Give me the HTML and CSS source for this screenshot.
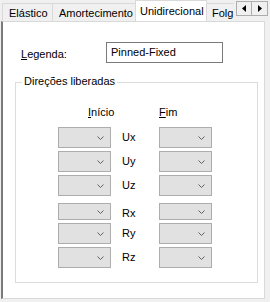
FILE: index.html
```html
<!DOCTYPE html>
<html>
<head>
<meta charset="utf-8">
<link rel="stylesheet" href="styles.css">
</head>
<body>
<div class="tabstrip">
  <div class="tabs">
    <div class="tab t1">Elástico</div>
    <div class="tab t2">Amortecimento</div>
    <div class="tab sel">Unidirecional</div>
    <div class="tab t4">Folg</div>
  </div>
  <div class="scroll">
    <div class="sbtn"><svg width="4" height="7" viewBox="0 0 4 7"><path d="M4 0 L0 3.5 L4 7 Z" fill="#000"/></svg></div>
    <div class="sbtn"><svg width="4" height="7" viewBox="0 0 4 7"><path d="M0 0 L4 3.5 L0 7 Z" fill="#000"/></svg></div>
  </div>
</div>
<div class="panel">
  <div class="row-legend">
    <span class="lbl"><u>L</u>egenda:</span>
    <div class="input">Pinned-Fixed</div>
  </div>
  <div class="group">
    <span class="gtitle">Direções liberadas</span>
    <div class="grid">
      <div class="hdr h1"><u>I</u>nício</div><div></div><div class="hdr h2"><u>F</u>im</div>

      <div class="combo"><svg width="7" height="4" viewBox="0 0 7 4"><path d="M0.5 0.5 L3.5 3.5 L6.5 0.5" fill="none" stroke="#606060" stroke-width="1"/></svg></div>
      <div class="dir">Ux</div>
      <div class="combo"><svg width="7" height="4" viewBox="0 0 7 4"><path d="M0.5 0.5 L3.5 3.5 L6.5 0.5" fill="none" stroke="#606060" stroke-width="1"/></svg></div>

      <div class="combo"><svg width="7" height="4" viewBox="0 0 7 4"><path d="M0.5 0.5 L3.5 3.5 L6.5 0.5" fill="none" stroke="#606060" stroke-width="1"/></svg></div>
      <div class="dir">Uy</div>
      <div class="combo"><svg width="7" height="4" viewBox="0 0 7 4"><path d="M0.5 0.5 L3.5 3.5 L6.5 0.5" fill="none" stroke="#606060" stroke-width="1"/></svg></div>

      <div class="combo"><svg width="7" height="4" viewBox="0 0 7 4"><path d="M0.5 0.5 L3.5 3.5 L6.5 0.5" fill="none" stroke="#606060" stroke-width="1"/></svg></div>
      <div class="dir">Uz</div>
      <div class="combo"><svg width="7" height="4" viewBox="0 0 7 4"><path d="M0.5 0.5 L3.5 3.5 L6.5 0.5" fill="none" stroke="#606060" stroke-width="1"/></svg></div>

      <div class="combo sp"><svg width="7" height="4" viewBox="0 0 7 4"><path d="M0.5 0.5 L3.5 3.5 L6.5 0.5" fill="none" stroke="#606060" stroke-width="1"/></svg></div>
      <div class="dir sp">Rx</div>
      <div class="combo sp"><svg width="7" height="4" viewBox="0 0 7 4"><path d="M0.5 0.5 L3.5 3.5 L6.5 0.5" fill="none" stroke="#606060" stroke-width="1"/></svg></div>

      <div class="combo"><svg width="7" height="4" viewBox="0 0 7 4"><path d="M0.5 0.5 L3.5 3.5 L6.5 0.5" fill="none" stroke="#606060" stroke-width="1"/></svg></div>
      <div class="dir">Ry</div>
      <div class="combo"><svg width="7" height="4" viewBox="0 0 7 4"><path d="M0.5 0.5 L3.5 3.5 L6.5 0.5" fill="none" stroke="#606060" stroke-width="1"/></svg></div>

      <div class="combo"><svg width="7" height="4" viewBox="0 0 7 4"><path d="M0.5 0.5 L3.5 3.5 L6.5 0.5" fill="none" stroke="#606060" stroke-width="1"/></svg></div>
      <div class="dir">Rz</div>
      <div class="combo"><svg width="7" height="4" viewBox="0 0 7 4"><path d="M0.5 0.5 L3.5 3.5 L6.5 0.5" fill="none" stroke="#606060" stroke-width="1"/></svg></div>
    </div>
  </div>
</div>
</body>
</html>
```
FILE: styles.css
```css
html, body {
  margin: 0;
  padding: 0;
  background: #f0f0f0;
  font-family: "Liberation Sans", Arial, sans-serif;
  font-size: 11px;
  color: #000;
  width: 270px;
  height: 302px;
  overflow: hidden;
}
.tabstrip {
  display: flex;
  height: 21px;
  position: relative;
  z-index: 2;
}
.tabs {
  display: flex;
  width: 236px;
  overflow: hidden;
  padding-left: 2px;
  box-sizing: border-box;
  align-items: flex-end;
}
.tab {
  flex: none;
  box-sizing: border-box;
  height: 18px;
  margin-top: 3px;
  border: 1px solid #d9d9d9;
  border-bottom: none;
  border-right: none;
  background: #f0f0f0;
  padding: 3px 0 0 6px;
  white-space: nowrap;
}
.t1 { width: 50px; }
.t2 { width: 83px; }
.t4 { width: 27px; padding-left: 5px; }
.sel {
  width: 72px;
  height: 22px;
  margin-top: 0;
  margin-bottom: -1px;
  background: #fff;
  padding: 4px 0 0 4px;
  border-right: 1px solid #d9d9d9;
}
.sel + .tab { border-left: none; }
.scroll {
  display: flex;
  padding-top: 1px;
}
.sbtn {
  width: 16px;
  height: 15px;
  box-sizing: border-box;
  border: 1px solid #adadad;
  background: #f0f0f0;
  display: flex;
  align-items: center;
  justify-content: center;
}
.sbtn + .sbtn { border-left: none; width: 16px; }
.panel {
  box-sizing: border-box;
  margin-left: 1px;
  width: 264px;
  height: 278px;
  background: #fff;
  border: 1px solid #d9d9d9;
  border-left: 2px solid #7a7a7a;
  padding: 20px 0 0 18px;
}
.row-legend {
  display: flex;
  align-items: center;
  height: 21px;
}
.lbl {
  width: 85px;
  padding-top: 3px;
}
.input {
  box-sizing: border-box;
  width: 117px;
  height: 21px;
  border: 1px solid #7a7a7a;
  padding: 3px 0 0 4px;
}
.group {
  position: relative;
  box-sizing: border-box;
  margin: 19px 0 0 -6px;
  width: 243px;
  height: 201px;
  border: 1px solid #dcdcdc;
}
.gtitle {
  position: absolute;
  top: -8px;
  left: 6px;
  background: #fff;
  padding: 0 2px;
  line-height: 13px;
}
.grid {
  display: grid;
  grid-template-columns: 53px 48px 53px;
  grid-auto-rows: 21px;
  row-gap: 3px;
  padding: 20px 0 0 42px;
}
.hdr {
  line-height: 13px;
  padding-top: 3px;
}
.h1 { padding-left: 30px; }
.h2 { padding-left: 0; }
.combo {
  box-sizing: border-box;
  background: #e1e1e1;
  border: 1px solid #adadad;
  display: flex;
  align-items: center;
  justify-content: flex-end;
  padding: 1px 6px 0 0;
}
.dir {
  padding-left: 11px;
  line-height: 21px;
}
.sp { margin-top: 4px; }
```
